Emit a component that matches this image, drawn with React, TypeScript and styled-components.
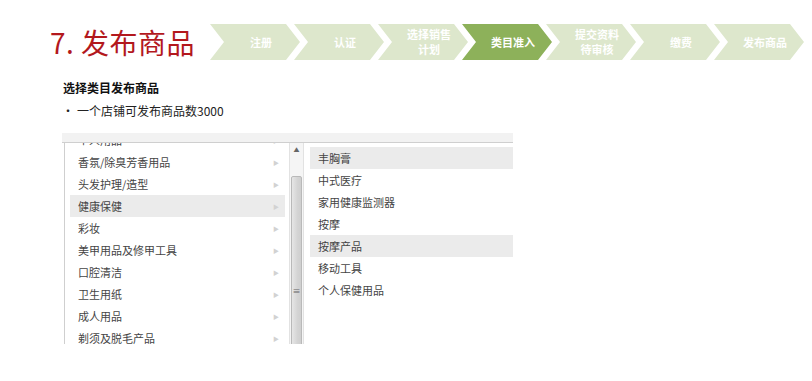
import styled, { createGlobalStyle } from "styled-components";

const GlobalStyle = createGlobalStyle`
  html, body {
    margin: 0;
    padding: 0;
    background: #ffffff;
  }
  body {
    font-family: "Noto Sans CJK SC", "Noto Sans", sans-serif;
    color: #333;
  }
`;

const Page = styled.div`
  width: 812px;
  height: 381px;
  overflow: hidden;
  padding-top: 24px;
  box-sizing: border-box;
`;

const Header = styled.div`
  display: flex;
  align-items: center;
  height: 36px;
  padding-left: 50px;
`;

const Title = styled.h1`
  margin: 0 23px 0 0;
  font-size: 28px;
  font-weight: 400;
  line-height: 36px;
  color: #b3181d;
  letter-spacing: 0.5px;
  white-space: nowrap;
  width: 137px;
`;

const Steps = styled.div`
  display: flex;
`;

const Step = styled.div<{ $active?: boolean }>`
  width: 90px;
  height: 36px;
  margin-left: -6px;
  display: flex;
  align-items: center;
  justify-content: center;
  padding-left: 12px;
  box-sizing: border-box;
  background: ${(p) => (p.$active ? "#8db15a" : "#dde7cc")};
  clip-path: polygon(0 0, 76px 0, 90px 50%, 76px 100%, 0 100%, 14px 50%);
  color: #fff;
  font-size: 11px;
  font-weight: 700;
  line-height: 15px;
  text-align: center;

  &:first-child {
    margin-left: 0;
  }
`;

const Body = styled.div`
  padding-left: 63px;
  margin-top: 19px;
  display: flex;
  flex-direction: column;
  gap: 5px;
`;

const Heading = styled.div`
  font-size: 12px;
  font-weight: 700;
  line-height: 18px;
  color: #111;
`;

const Bullet = styled.div`
  display: flex;
  font-size: 12px;
  line-height: 18px;
  color: #222;

  &::before {
    content: "•";
    width: 15px;
    margin-left: -1px;
    flex: none;
  }
`;

const Panel = styled.div`
  margin: 13px 0 0 62px;
  width: 451px;
  display: flex;
  flex-direction: column;
`;

const PanelTop = styled.div`
  height: 9px;
  background: #f2f2f2;
  border-bottom: 1px solid #cfcfcf;
`;

const PanelBody = styled.div`
  height: 201px;
  display: flex;
  overflow: hidden;
`;

const LeftList = styled.div`
  width: 224px;
  margin-left: 2px;
  border-left: 1px solid #cfcfcf;
  overflow: hidden;
  display: flex;
  flex-direction: column;
`;

const LeftItems = styled.div`
  margin-top: -14px;
  display: flex;
  flex-direction: column;
`;

const Row = styled.div<{ $selected?: boolean }>`
  height: 22px;
  flex: none;
  display: flex;
  align-items: center;
  justify-content: space-between;
  margin: 0 4px 0 5px;
  padding: 0 6px 0 8px;
  font-size: 11px;
  color: #444;
  background: ${(p) => (p.$selected ? "#ebebeb" : "transparent")};
`;

const Arrow = styled.span`
  font-size: 6px;
  color: #d2d2d2;
`;

const Scrollbar = styled.div`
  width: 15px;
  flex: none;
  background: #f5f5f5;
  border-left: 1px solid #e2e2e2;
  border-right: 1px solid #e2e2e2;
  box-sizing: border-box;
`;

const ScrollUp = styled.div`
  height: 14px;
  text-align: center;
  font-size: 6px;
  line-height: 14px;
  color: #666;
`;

const Thumb = styled.div`
  margin: 19px 1px 0 1px;
  height: 180px;
  border: 1px solid #b9b9b9;
  border-radius: 2px;
  background: linear-gradient(to right, #e6e6e6, #d4d4d4 60%, #cfcfcf);
  display: flex;
  align-items: center;
  justify-content: center;
  padding-top: 48px;
  box-sizing: border-box;
  font-size: 8px;
  color: #666;
`;

const RightList = styled.div`
  flex: 1;
  margin-left: 4px;
  padding-top: 4px;
  display: flex;
  flex-direction: column;
`;

const RightRow = styled.div<{ $selected?: boolean }>`
  height: 22px;
  flex: none;
  display: flex;
  align-items: center;
  margin-left: 2px;
  padding-left: 8px;
  font-size: 11px;
  color: #444;
  background: ${(p) => (p.$selected ? "#ebebeb" : "transparent")};
`;

const steps: { label: string[]; active?: boolean }[] = [
  { label: ["注册"] },
  { label: ["认证"] },
  { label: ["选择销售", "计划"] },
  { label: ["类目准入"], active: true },
  { label: ["提交资料", "待审核"] },
  { label: ["缴费"] },
  { label: ["发布商品"] },
];

const leftItems = [
  "个人用品",
  "香氛/除臭芳香用品",
  "头发护理/造型",
  "健康保健",
  "彩妆",
  "美甲用品及修甲工具",
  "口腔清洁",
  "卫生用纸",
  "成人用品",
  "剃须及脱毛产品",
];

const rightItems = ["丰胸膏", "中式医疗", "家用健康监测器", "按摩", "按摩产品", "移动工具", "个人保健用品"];

const App = () => {
  return (
    <>
      <GlobalStyle />
      <Page>
        <Header>
          <Title>7. 发布商品</Title>
          <Steps>
            {steps.map((s) => (
              <Step key={s.label.join("")} $active={s.active}>
                <div>
                  {s.label.map((l) => (
                    <div key={l}>{l}</div>
                  ))}
                </div>
              </Step>
            ))}
          </Steps>
        </Header>

        <Body>
          <Heading>选择类目发布商品</Heading>
          <Bullet>一个店铺可发布商品数3000</Bullet>
        </Body>

        <Panel>
          <PanelTop />
          <PanelBody>
            <LeftList>
              <LeftItems>
                {leftItems.map((item) => (
                  <Row key={item} $selected={item === "健康保健"}>
                    <span>{item}</span>
                    <Arrow>▶</Arrow>
                  </Row>
                ))}
              </LeftItems>
            </LeftList>
            <Scrollbar>
              <ScrollUp>▲</ScrollUp>
              <Thumb>≡</Thumb>
            </Scrollbar>
            <RightList>
              {rightItems.map((item) => (
                <RightRow key={item} $selected={item === "丰胸膏" || item === "按摩产品"}>
                  {item}
                </RightRow>
              ))}
            </RightList>
          </PanelBody>
        </Panel>
      </Page>
    </>
  );
};

export default App;
